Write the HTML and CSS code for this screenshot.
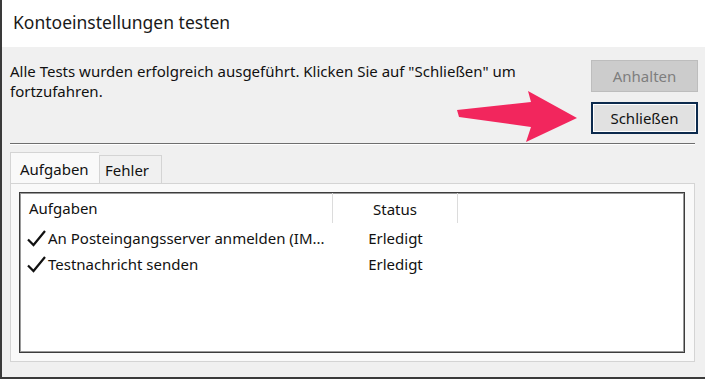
FILE: index.html
```html
<!DOCTYPE html>
<html lang="de">
<head>
<meta charset="utf-8">
<title>Kontoeinstellungen testen</title>
<link rel="stylesheet" href="styles.css">
</head>
<body>
<div class="window">
  <div class="titlebar">Kontoeinstellungen testen</div>
  <div class="content">
    <div class="top">
      <p class="message">Alle Tests wurden erfolgreich ausgeführt. Klicken Sie auf "Schließen" um<br>fortzufahren.</p>
      <div class="buttons">
        <button class="btn btn-disabled" disabled>Anhalten</button>
        <button class="btn btn-default">Schließen</button>
      </div>
    </div>
    <div class="separator"></div>
    <div class="tabs">
      <div class="tab tab-active">Aufgaben</div>
      <div class="tab">Fehler</div>
    </div>
    <div class="panel">
      <div class="listbox">
        <div class="list-header">
          <div class="col col-task">Aufgaben</div>
          <div class="col col-status">Status</div>
        </div>
        <div class="list-rows">
          <div class="list-row">
            <div class="col col-task">
              <svg class="check" viewBox="0 0 22 20" width="22" height="20"><path d="M2 11.5 L7.5 17 L19 3" fill="none" stroke="#111" stroke-width="2.2"/></svg>
              <span>An Posteingangsserver anmelden (IM...</span>
            </div>
            <div class="col col-status">Erledigt</div>
          </div>
          <div class="list-row">
            <div class="col col-task">
              <svg class="check" viewBox="0 0 22 20" width="22" height="20"><path d="M2 11.5 L7.5 17 L19 3" fill="none" stroke="#111" stroke-width="2.2"/></svg>
              <span>Testnachricht senden</span>
            </div>
            <div class="col col-status">Erledigt</div>
          </div>
        </div>
      </div>
    </div>
  </div>
  <svg class="arrow" width="130" height="60" viewBox="455 88 130 60">
    <polygon points="457,110 531,102 528,91 577,118 526,142 531,127 459,117" fill="#f2265d"/>
  </svg>
</div>
</body>
</html>
```

FILE: styles.css
```css
html, body {
  margin: 0;
  padding: 0;
  background: #ffffff;
}

.window {
  position: relative;
  width: 705px;
  height: 379px;
  box-sizing: border-box;
  border-left: 2px solid #3a3a3a;
  border-bottom: 2px solid #3a3a3a;
  background: #f0f0f0;
  font-family: "Noto Sans", "Open Sans", sans-serif;
  color: #111;
  overflow: hidden;
}

.titlebar {
  height: 47px;
  box-sizing: border-box;
  background: #ffffff;
  padding: 10px 0 0 11px;
  font-size: 17.5px;
  line-height: 24px;
  color: #1a1a1a;
}

.content {
  display: flex;
  flex-direction: column;
}

.top {
  display: flex;
  padding: 13px 7px 0 8px;
}

.message {
  margin: 1px 0 0 0;
  flex: 1;
  font-size: 15px;
  line-height: 20px;
}

.buttons {
  display: flex;
  flex-direction: column;
  gap: 10px;
}

.btn {
  width: 107px;
  height: 32px;
  box-sizing: border-box;
  font-family: "Noto Sans", "Open Sans", sans-serif;
  font-size: 15px;
  padding: 0;
  margin: 0;
}

.btn-disabled {
  background: #cccccc;
  border: 1px solid #bdbdbd;
  color: #7e7e7e;
}

.btn-default {
  background: #e1e1e1;
  border: 2px solid #0c2a4d;
  box-shadow: inset 0 0 0 1px #ffffff;
  color: #111;
}

.separator {
  margin: 9px 10px 0 8px;
  height: 1px;
  background: #6e6e6e;
  border-bottom: 1px solid #ffffff;
}

.tabs {
  display: flex;
  align-items: flex-end;
  margin: 7px 0 0 8px;
  height: 31px;
}

.tab {
  box-sizing: border-box;
  height: 28px;
  width: 63px;
  padding: 0 0 0 5px;
  font-size: 15px;
  line-height: 28px;
  border: 1px solid #d4d4d4;
  border-bottom: none;
  background: #f0f0f0;
}

.tab-active {
  height: 31px;
  width: 89px;
  padding: 0 0 0 9px;
  line-height: 32px;
  background: #f9f9f9;
  border-right: none;
}

.panel {
  margin-left: 8px;
  width: 685px;
  height: 179px;
  box-sizing: border-box;
  border: 1px solid #d4d4d4;
  background: #f9f9f9;
  padding: 8px 9px 8px 8px;
}

.listbox {
  height: 100%;
  box-sizing: border-box;
  border: 1px solid #3c3c3c;
  box-shadow: inset 0 0 0 1px #9a9a9a;
  background: #ffffff;
  font-size: 15px;
}

.list-header {
  display: flex;
  height: 30px;
}

.list-header .col {
  border-right: 1px solid #dcdcdc;
  line-height: 32px;
}

.col-task {
  width: 313px;
  box-sizing: border-box;
  padding-left: 9px;
  display: flex;
  align-items: center;
}

.col-status {
  width: 125px;
  box-sizing: border-box;
  text-align: center;
}

.list-rows {
  padding-top: 2px;
}

.list-row {
  display: flex;
  height: 26px;
  line-height: 26px;
}

.list-row .col-task {
  padding-left: 6px;
  white-space: nowrap;
}

.check {
  flex: none;
  margin-right: 0;
}

.arrow {
  position: absolute;
  left: 453px;
  top: 88px;
}
```
